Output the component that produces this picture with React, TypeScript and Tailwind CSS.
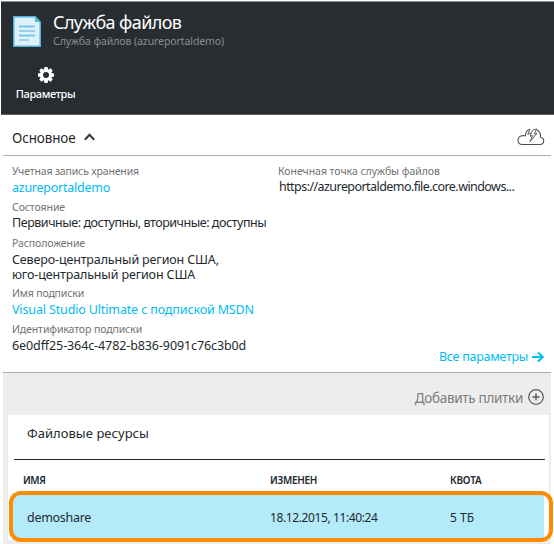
import React from "react";

function Label({ children, className = "" }: { children: React.ReactNode; className?: string }) {
  return (
    <div className={`h-4 whitespace-nowrap text-[10.5px] leading-4 text-[#707274] ${className}`}>{children}</div>
  );
}

function Value({ children, className = "" }: { children: React.ReactNode; className?: string }) {
  return <div className={`whitespace-nowrap text-[12.5px] leading-[15px] ${className}`}>{children}</div>;
}

function DocumentIcon() {
  return (
    <svg className="mt-[14px] h-[31px] w-[28px] shrink-0" viewBox="0 0 28 31" fill="none">
      <path d="M.75.75h21.5L27.25 6v24.25H.75z" fill="#dff1fa" stroke="#4fb6dc" strokeWidth="1.5" />
      <path d="M22 .3 27.7 6H22z" fill="#4fb6dc" />
      <path d="M6 10.5h16M6 19.5h16" stroke="#7cc6e6" strokeWidth="1.8" />
      <path d="M6 15h16M6 24h10" stroke="#4fb3dc" strokeWidth="1.2" />
    </svg>
  );
}

function GearIcon() {
  return (
    <svg className="h-4 w-4" viewBox="-8 -8 16 16">
      <g fill="#fff">
        {[0, 45, 90, 135].map((a) => (
          <path key={a} transform={`rotate(${a})`} d="M-1.5-8h3l.7 3v10l-.7 3h-3l-.7-3V-5z" />
        ))}
        <circle r="5.8" />
      </g>
      <circle r="3" fill="#282d31" />
    </svg>
  );
}

function CloudIcon() {
  return (
    <svg className="h-[18px] w-[28px]" viewBox="0 0 28 18" fill="none" stroke="#4a4e52" strokeWidth="1.1" strokeLinejoin="round">
      <path d="M8.500 8.200C7.800 7.700 6.800 7.500 5.900 7.600 3.200 7.700 1 9.700 1 12.300c0 2.500 1.800 4.200 4.500 4.200h17.200c2.400 0 4-1.500 4-3.500 0-2-1.300-3.400-3.400-3.700.6-3.200-.8-6-3.300-7.300" />
      <path d="M8.300 8C8.300 4.500 10 2 13 1.300" />
      <path d="M13 1.300 10.700 6.300l3.600-1.300-1 3.400 2.400-.9-2.700 6.200 7-8.400-2.900.7 2.600-4.800-3.600.6-1.700 3" strokeWidth=".9" />
    </svg>
  );
}

export default function App() {
  return (
    <div className="h-[544px] w-[554px] overflow-hidden bg-white pt-px font-['Noto_Sans','Open_Sans',sans-serif] text-[#24292e]">
      <header className="ml-px h-[114px] border-y border-[#8b8d8f] border-b-[#5a5d60] bg-[#282d31]">
        <div className="flex h-[52px] pl-[12px]">
          <DocumentIcon />
          <div className="pl-[12px] pt-[8px]">
            <h1 className="h-6 whitespace-nowrap text-[18px] leading-6 tracking-[-0.61px] text-white">Служба файлов</h1>
            <p className="-mt-px h-4 whitespace-nowrap text-[10.5px] leading-4 tracking-[-0.09px] text-[#8a8d90]">
              Служба файлов (azureportaldemo)
            </p>
          </div>
        </div>
        <button className="ml-[15px] mt-[13px] flex w-[60px] flex-col items-center">
          <GearIcon />
          <span className="-ml-px mt-[3px] h-4 whitespace-nowrap text-[11px] font-medium leading-4 tracking-[-0.38px] text-white">
            Параметры
          </span>
        </button>
      </header>

      <main className="mx-[3px]">
        <div className="flex h-[41px] items-center border-b border-[#adadad] pl-[9px] pr-[6px]">
          <span className="pt-[5px] text-[13.5px] leading-5 tracking-[-0.14px]">Основное</span>
          <svg className="ml-[9px] mt-[4px] h-[8px] w-[11px]" viewBox="0 0 11 8" fill="none">
            <path d="M.8 6.700 5.500 1.700l4.700 5" stroke="#33373b" strokeWidth="2" />
          </svg>
          <div className="ml-auto pt-[3px]">
            <CloudIcon />
          </div>
        </div>

        <section className="flex h-[217px] border-b border-[#adadad] pl-[9px] pr-[7px] pt-[7px]">
          <div className="w-[266px]">
            <Label className="tracking-[-0.15px]">Учетная запись хранения</Label>
            <Value className="mt-px tracking-[-0.25px] text-[#00bcf2]">azureportaldemo</Value>
            <Label className="mt-1 tracking-[-0.09px]">Состояние</Label>
            <Value className="tracking-[-0.46px]">Первичные: доступны, вторичные: доступны</Value>
            <Label className="mt-[5px] tracking-[-0.1px]">Расположение</Label>
            <Value className="mt-px tracking-[-0.14px]">
              Северо-центральный регион США,
              <br />
              юго-центральный регион США
            </Value>
            <Label className="mt-[3px] tracking-[-0.15px]">Имя подписки</Label>
            <Value className="mt-px tracking-[-0.14px] text-[#00bcf2]">Visual Studio Ultimate с подпиской MSDN</Value>
            <Label className="mt-1 tracking-[-0.11px]">Идентификатор подписки</Label>
            <Value className="mt-px tracking-[-0.1px]">6e0dff25-364c-4782-b836-9091c76c3b0d</Value>
          </div>
          <div className="flex flex-1 flex-col">
            <Label className="tracking-[-0.04px]">Конечная точка службы файлов</Label>
            <Value className="pl-px tracking-[-0.56px]">https://azureportaldemo.file.core.windows...</Value>
            <div className="mb-2 mt-auto flex h-[15px] items-center justify-end text-[#00bcf2]">
              <Value className="tracking-[-0.28px]">Все параметры</Value>
              <svg className="ml-[4px] h-[12px] w-[12px]" viewBox="0 0 12 12" fill="none">
                <path d="M0 6h10.500M6 1.500 10.700 6 6 10.500" stroke="#00bcf2" strokeWidth="2" />
              </svg>
            </div>
          </div>
        </section>

        <section className="h-[171px] bg-[#ededed] pl-[5px] pr-[2px]">
          <div className="flex h-[42px] items-center justify-end pr-[5px] pt-[7px] text-[#7a7d80]">
            <span className="text-[13.5px] leading-5 tracking-[-0.31px]">Добавить плитки</span>
            <svg className="-mt-px ml-[5px] h-4 w-4" viewBox="0 0 16 16" fill="none" stroke="#55595c">
              <circle cx="8" cy="8" r="7.300" strokeWidth="1.200" />
              <path d="M4.500 8h7M8 4.500v7" strokeWidth="1.400" />
            </svg>
          </div>
          <div className="relative h-[125px] bg-white">
            <h2 className="ml-[6px] mr-[4px] h-[45px] border-b border-[#24292e] pl-[13px] pt-[8px] text-[13px] leading-5 tracking-[0.04px]">
              Файловые ресурсы
            </h2>
            <div className="flex h-[33px] pl-[15px] pt-[12px] text-[10px] font-semibold leading-4">
              <span className="w-[247px] tracking-[-0.41px]">ИМЯ</span>
              <span className="w-[180px] tracking-[-0.33px]">ИЗМЕНЕН</span>
              <span className="tracking-[-0.19px]">КВОТА</span>
            </div>
            <div className="ml-[4px] mr-[5px] flex h-[47px] items-center bg-[#b3ebfb] pl-[15px] pt-[2px] leading-5">
              <span className="w-[243px] text-[12.5px] tracking-[-0.29px]">demoshare</span>
              <span className="w-[180px] text-[12px] tracking-[-0.39px]">18.12.2015, 11:40:24</span>
              <span className="text-[12px]">5 ТБ</span>
            </div>
            <div className="absolute left-px top-[76px] h-[51px] w-[544px] rounded-[12px] border-[4.500px] border-[#ff8c00]" />
          </div>
        </section>
      </main>
    </div>
  );
}
